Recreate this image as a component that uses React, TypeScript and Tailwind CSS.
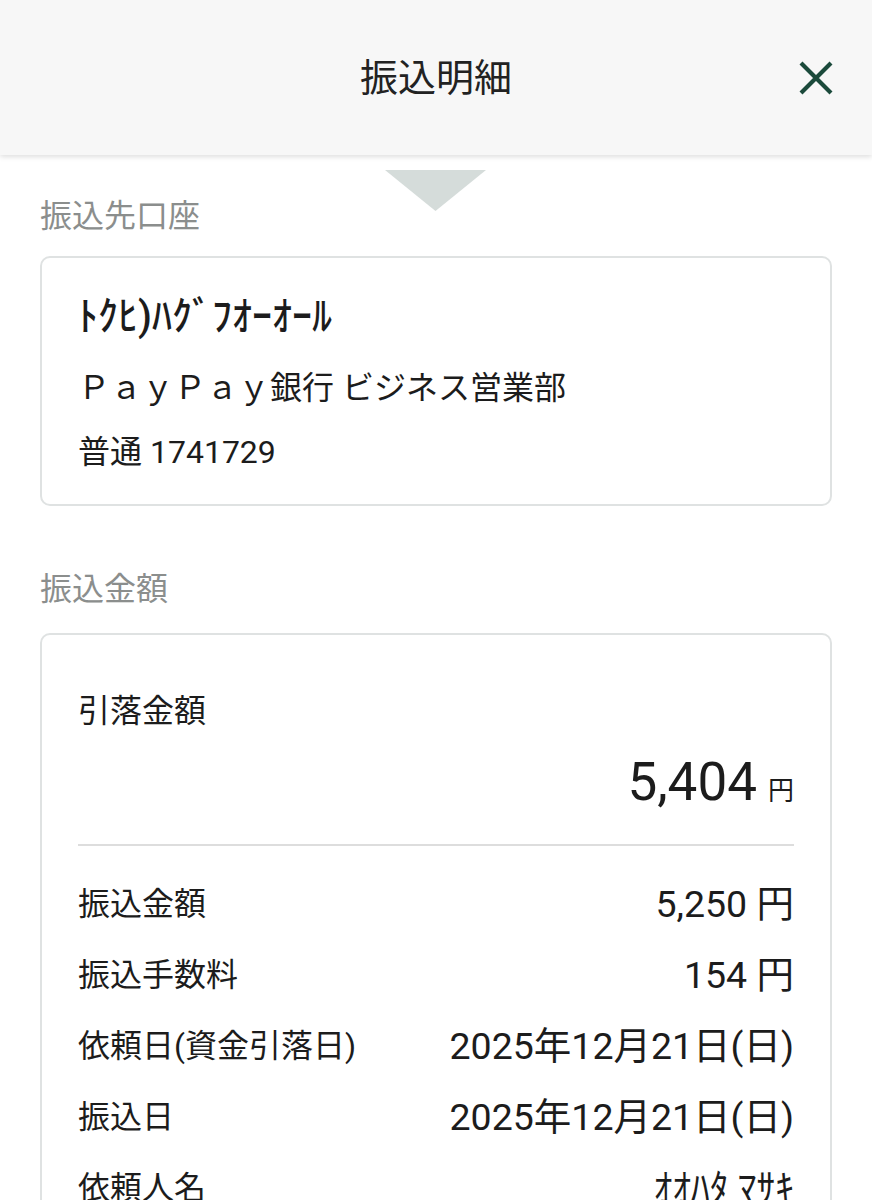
import React from "react";

const FONT = "font-['Roboto','Noto_Sans_CJK_JP',sans-serif]";

function CloseIcon() {
  return (
    <svg width="34" height="34" viewBox="0 0 34 34" className="block">
      <path d="M2 2 L32 32 M32 2 L2 32" stroke="#1b4a3b" strokeWidth="4.2" fill="none" />
    </svg>
  );
}

function Row({ label, value }: { label: string; value: React.ReactNode }) {
  return (
    <div className="flex h-[71px] items-center justify-between">
      <span className="text-[32px] leading-[48px] text-[#1c1c1c]">{label}</span>
      <span className="text-[37.5px] leading-[48px] text-[#1c1c1c]">{value}</span>
    </div>
  );
}

export default function App() {
  return (
    <div className={`${FONT} min-h-[1200px] w-[872px] bg-white`}>
      <header className="relative z-10 grid h-[155px] grid-cols-[1fr_auto_1fr] items-center bg-[#f7f7f7] shadow-[0_2px_5px_rgba(0,0,0,0.13)]">
        <div />
        <h1 className="text-[38px] leading-[48px] font-normal text-[#222222]">振込明細</h1>
        <div className="mr-[39px] flex justify-end">
          <CloseIcon />
        </div>
      </header>

      <main className="relative px-[40px] pt-[37px] pb-[40px]">
        <svg
          width="101"
          height="41"
          viewBox="0 0 101 41"
          className="absolute top-[15px] left-[385px]"
        >
          <polygon points="0,0 101,0 50.5,41" fill="#d5dcda" />
        </svg>

        <div className="text-[32px] leading-[48px] text-[#8b8e8d]">振込先口座</div>

        <section className="mt-[16px] flex h-[250px] flex-col rounded-[10px] border-2 border-[#dfe2e2] px-[36px] pt-[35px]">
          <div className="text-[40px] leading-[48px] font-medium text-[#1c1c1c]">ﾄｸﾋ)ﾊｸﾞﾌｵｰｵｰﾙ</div>
          <div className="mt-[23px] text-[32px] leading-[48px] text-[#1c1c1c]">ＰａｙＰａｙ銀行 ビジネス営業部</div>
          <div className="mt-[16px] text-[32px] leading-[48px] text-[#1c1c1c]">普通 1741729</div>
        </section>

        <div className="mt-[59px] text-[32px] leading-[48px] text-[#8b8e8d]">振込金額</div>

        <section className="mt-[20px] flex flex-col rounded-[10px] border-2 border-[#dfe2e2] px-[36px] pt-[52px] pb-[60px]">
          <div className="text-[32px] leading-[48px] text-[#1c1c1c]">引落金額</div>
          <div className="mt-[17px] flex items-baseline justify-end text-[#1c1c1c]">
            <span className="text-[53px] leading-[60px]">5,404</span>
            <span className="ml-[11px] text-[26px] leading-[60px]">円</span>
          </div>
          <div className="mt-[23px] h-[2px] bg-[#dddddd]" />
          <div className="mt-[22px] flex flex-col">
            <Row label="振込金額" value="5,250 円" />
            <Row label="振込手数料" value="154 円" />
            <Row label="依頼日(資金引落日)" value="2025年12月21日(日)" />
            <Row label="振込日" value="2025年12月21日(日)" />
            <Row label="依頼人名" value="ｵｵﾊﾀ ﾏｻｷ" />
          </div>
        </section>
      </main>
    </div>
  );
}
